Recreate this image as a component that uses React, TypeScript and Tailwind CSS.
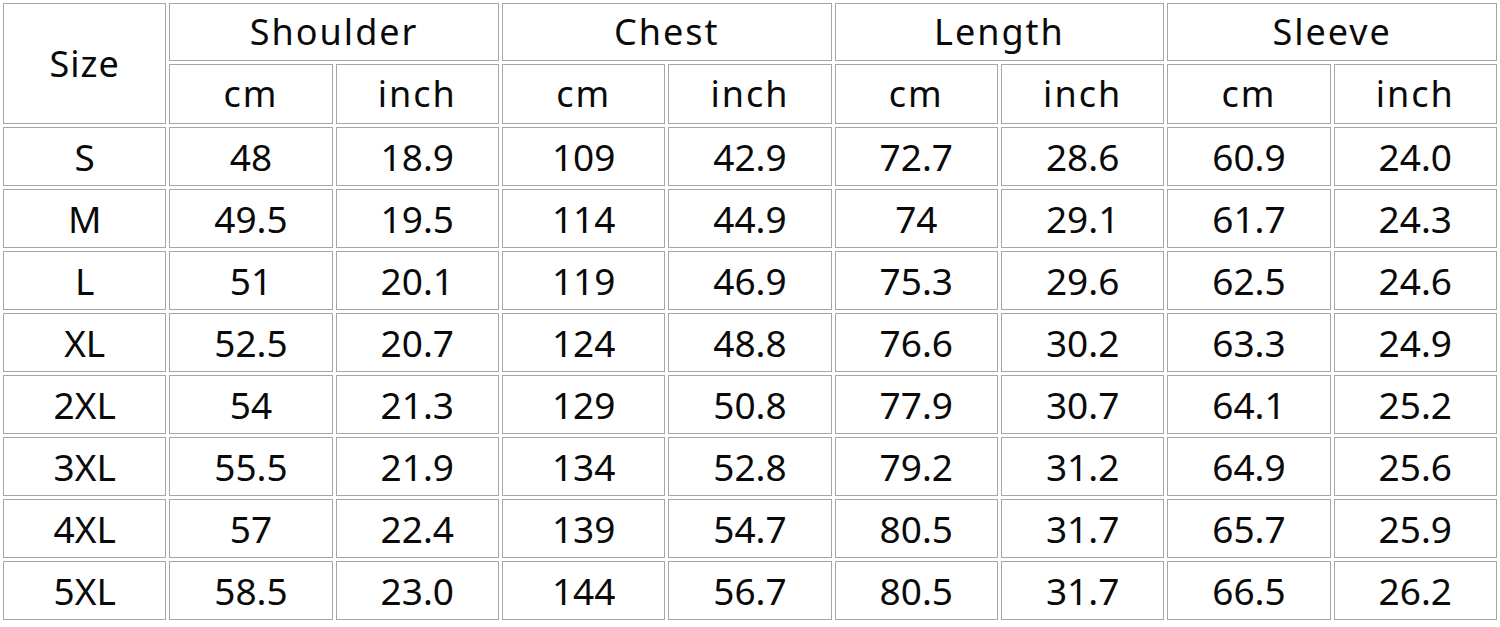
import React from "react";

const rows: string[][] = [
  ["S", "48", "18.9", "109", "42.9", "72.7", "28.6", "60.9", "24.0"],
  ["M", "49.5", "19.5", "114", "44.9", "74", "29.1", "61.7", "24.3"],
  ["L", "51", "20.1", "119", "46.9", "75.3", "29.6", "62.5", "24.6"],
  ["XL", "52.5", "20.7", "124", "48.8", "76.6", "30.2", "63.3", "24.9"],
  ["2XL", "54", "21.3", "129", "50.8", "77.9", "30.7", "64.1", "25.2"],
  ["3XL", "55.5", "21.9", "134", "52.8", "79.2", "31.2", "64.9", "25.6"],
  ["4XL", "57", "22.4", "139", "54.7", "80.5", "31.7", "65.7", "25.9"],
  ["5XL", "58.5", "23.0", "144", "56.7", "80.5", "31.7", "66.5", "26.2"],
];

const groups = ["Shoulder", "Chest", "Length", "Sleeve"];

const cell =
  "border border-[#a6a6a6] text-center align-middle p-0 font-normal text-[#0a0a0a]";

export default function App() {
  return (
    <div
      className="w-[1500px] h-[627px] bg-white overflow-hidden"
      style={{ fontFamily: '"Noto Sans", "Open Sans", sans-serif' }}
    >
      <table className="w-full table-fixed border-separate border-spacing-[3px] text-[36px] leading-none">
        <colgroup>
          {Array.from({ length: 9 }).map((_, i) => (
            <col key={i} />
          ))}
        </colgroup>
        <thead>
          <tr className="h-[58px]">
            <th rowSpan={2} className={`${cell} tracking-[1px]`}>
              Size
            </th>
            {groups.map((g) => (
              <th key={g} colSpan={2} className={`${cell} tracking-[2px]`}>
                {g}
              </th>
            ))}
          </tr>
          <tr className="h-[60px]">
            {groups.map((g) => (
              <React.Fragment key={g}>
                <th className={`${cell} tracking-[2px]`}>cm</th>
                <th className={`${cell} tracking-[2px]`}>inch</th>
              </React.Fragment>
            ))}
          </tr>
        </thead>
        <tbody>
          {rows.map((r) => (
            <tr key={r[0]} className="h-[59px]">
              {r.map((v, i) => (
                <td key={i} className={`${cell} text-[37px]`}>
                  {v}
                </td>
              ))}
            </tr>
          ))}
        </tbody>
      </table>
    </div>
  );
}
